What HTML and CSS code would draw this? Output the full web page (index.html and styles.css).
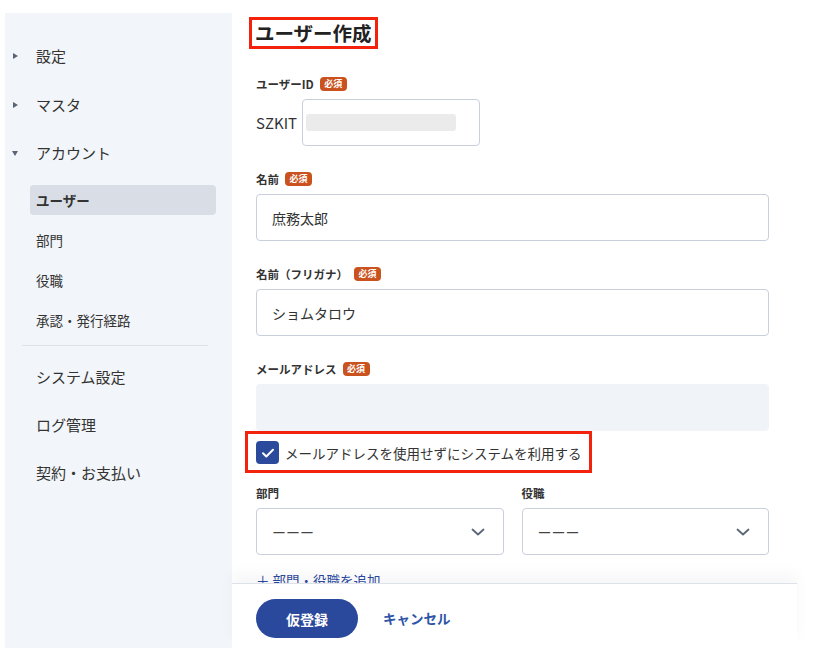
FILE: index.html
```html
<!DOCTYPE html>
<html lang="ja">
<head>
    <meta charset="UTF-8">
    <meta name="viewport" content="width=device-width, initial-scale=1.0">
    <title>ユーザー作成</title>
    <link rel="stylesheet" href="styles.css">
</head>
<body>
    <div class="page">
        <nav class="sidebar">
            <div class="nav-group"><span class="tri tri-right"></span>設定</div>
            <div class="nav-group"><span class="tri tri-right"></span>マスタ</div>
            <div class="nav-group"><span class="tri tri-down"></span>アカウント</div>
            <div class="sub-list">
                <div class="sub-item"><span class="sub-label active">ユーザー</span></div>
                <div class="sub-item"><span class="sub-label">部門</span></div>
                <div class="sub-item"><span class="sub-label">役職</span></div>
                <div class="sub-item"><span class="sub-label">承認・発行経路</span></div>
            </div>
            <div class="divider"></div>
            <div class="nav-link">システム設定</div>
            <div class="nav-link">ログ管理</div>
            <div class="nav-link">契約・お支払い</div>
        </nav>

        <main class="main">
            <div class="content">
                <h1 class="title">ユーザー作成</h1>

                <div class="field first">
                    <div class="label">ユーザーID <span class="badge">必須</span></div>
                    <div class="id-row">
                        <span class="prefix">SZKIT</span>
                        <div class="input id-input"><div class="redacted"></div></div>
                    </div>
                </div>

                <div class="field">
                    <div class="label">名前 <span class="badge">必須</span></div>
                    <div class="input">庶務太郎</div>
                </div>

                <div class="field">
                    <div class="label">名前（フリガナ） <span class="badge">必須</span></div>
                    <div class="input">ショムタロウ</div>
                </div>

                <div class="field">
                    <div class="label">メールアドレス <span class="badge">必須</span></div>
                    <div class="input disabled"></div>
                </div>

                <div class="check-row">
                    <span class="checkbox">
                        <svg width="16" height="16" viewBox="0 0 16 16"><path d="M3 8.2l3.3 3.3L13 4.8" fill="none" stroke="#fff" stroke-width="2" stroke-linecap="round" stroke-linejoin="round"/></svg>
                    </span>
                    メールアドレスを使用せずにシステムを利用する
                </div>

                <div class="select-grid">
                    <div>
                        <div class="label">部門</div>
                        <div class="input select">ーーー<svg class="chev" width="14" height="8" viewBox="0 0 14 8"><path d="M1.5 1.5L7 6.5l5.5-5" fill="none" stroke="#5b6577" stroke-width="1.8" stroke-linecap="round" stroke-linejoin="round"/></svg></div>
                    </div>
                    <div>
                        <div class="label">役職</div>
                        <div class="input select">ーーー<svg class="chev" width="14" height="8" viewBox="0 0 14 8"><path d="M1.5 1.5L7 6.5l5.5-5" fill="none" stroke="#5b6577" stroke-width="1.8" stroke-linecap="round" stroke-linejoin="round"/></svg></div>
                    </div>
                </div>

                <div class="add-link">＋ 部門・役職を追加</div>
            </div>

            <footer class="footer">
                <button class="btn-primary">仮登録</button>
                <span class="btn-link">キャンセル</span>
            </footer>
        </main>
    </div>
</body>
</html>
```

FILE: styles.css
```css
* {
    margin: 0;
    padding: 0;
    box-sizing: border-box;
}
html, body {
    width: 100%;
    height: 100%;
}
body {
    font-family: "Noto Sans CJK JP", "Noto Sans", sans-serif;
    color: #333;
    background: #fff;
    overflow: hidden;
}
.page {
    display: flex;
    height: 648px;
}

/* sidebar */
.sidebar {
    width: 227px;
    margin: 13px 0 0 5px;
    background-color: #f2f5f9;
    padding-top: 19px;
}
.nav-group {
    position: relative;
    height: 48.5px;
    line-height: 48px;
    padding-left: 31px;
    font-size: 15px;
}
.tri {
    position: absolute;
    left: 8px;
    top: 21px;
    width: 0;
    height: 0;
}
.tri-right {
    border-top: 3.5px solid transparent;
    border-bottom: 3.5px solid transparent;
    border-left: 5px solid #5b6475;
}
.tri-down {
    top: 22px;
    left: 7px;
    border-left: 3.5px solid transparent;
    border-right: 3.5px solid transparent;
    border-top: 5px solid #5b6475;
}
.sub-list {
    padding: 2px 0 0 25px;
}
.sub-item {
    height: 40px;
    display: flex;
    align-items: center;
}
.sub-label {
    display: block;
    width: 186px;
    height: 30px;
    line-height: 30px;
    padding-left: 6px;
    font-size: 13.5px;
    border-radius: 4px;
}
.sub-label.active {
    background-color: #d9dde6;
    font-weight: bold;
}
.divider {
    margin: 5px 24px 7px 17px;
    border-top: 1px solid #dde2ea;
}
.nav-link {
    height: 48px;
    line-height: 48px;
    padding-left: 31px;
    font-size: 15px;
}

/* main */
.main {
    width: 565px;
    display: flex;
    flex-direction: column;
}
.content {
    flex: 1;
    overflow: hidden;
    padding: 17px 28px 0 24px;
}
.title {
    display: inline-block;
    margin-left: -7px;
    border: 3px solid #f3220c;
    padding: 0 3px;
    font-size: 19.5px;
    line-height: 26px;
    font-weight: bold;
    color: #222;
}
.field {
    margin-top: 25px;
}
.field.first {
    margin-top: 27px;
}
.label {
    font-size: 11.5px;
    font-weight: bold;
    line-height: 16px;
    margin-bottom: 7px;
    display: flex;
    align-items: center;
    gap: 6px;
}
.badge {
    display: inline-block;
    background-color: #c9521e;
    color: #fff;
    font-size: 9px;
    line-height: 14px;
    padding: 0 4.5px;
    border-radius: 4px;
}
.input {
    height: 47px;
    border: 1.5px solid #c9d0dc;
    border-radius: 4px;
    padding-left: 15px;
    display: flex;
    align-items: center;
    font-size: 14px;
}
.input.disabled {
    border: none;
    background-color: #f0f4f8;
}
.id-row {
    display: flex;
    align-items: center;
    gap: 5px;
}
.prefix {
    font-size: 15px;
}
.id-input {
    width: 178px;
    padding-left: 3px;
}
.redacted {
    width: 150px;
    height: 17px;
    border-radius: 3px;
    background-color: #ebebeb;
}

.check-row {
    display: inline-flex;
    align-items: center;
    gap: 6px;
    margin: 0 0 0 -11px;
    padding: 7px 7px 6px 8px;
    border: 3px solid #f3220c;
    font-size: 13.5px;
}
.checkbox {
    width: 23px;
    height: 23px;
    border-radius: 4px;
    background-color: #2b4a9c;
    display: flex;
    align-items: center;
    justify-content: center;
}

.select-grid {
    display: grid;
    grid-template-columns: 1fr 1fr;
    gap: 18px;
    margin-top: 12px;
}
.select {
    justify-content: space-between;
    padding-right: 18px;
    color: #444;
}
.chev {
    display: block;
}
.add-link {
    margin-top: 15px;
    font-size: 13.5px;
    color: #2b4a9c;
}

.footer {
    height: 65px;
    border-top: 1px solid #dde2ea;
    box-shadow: 0 -10px 14px rgba(20, 40, 80, 0.035);
    padding: 15px 24px 0;
    display: flex;
    align-items: flex-start;
    gap: 25px;
    background: #fff;
    position: relative;
}
.btn-primary {
    width: 102px;
    height: 39px;
    border: none;
    border-radius: 20px;
    background-color: #2a489c;
    color: #fff;
    font-family: inherit;
    font-size: 14px;
    font-weight: bold;
}
.btn-link {
    line-height: 39px;
    font-size: 13.5px;
    font-weight: bold;
    color: #2f55a8;
}
```
